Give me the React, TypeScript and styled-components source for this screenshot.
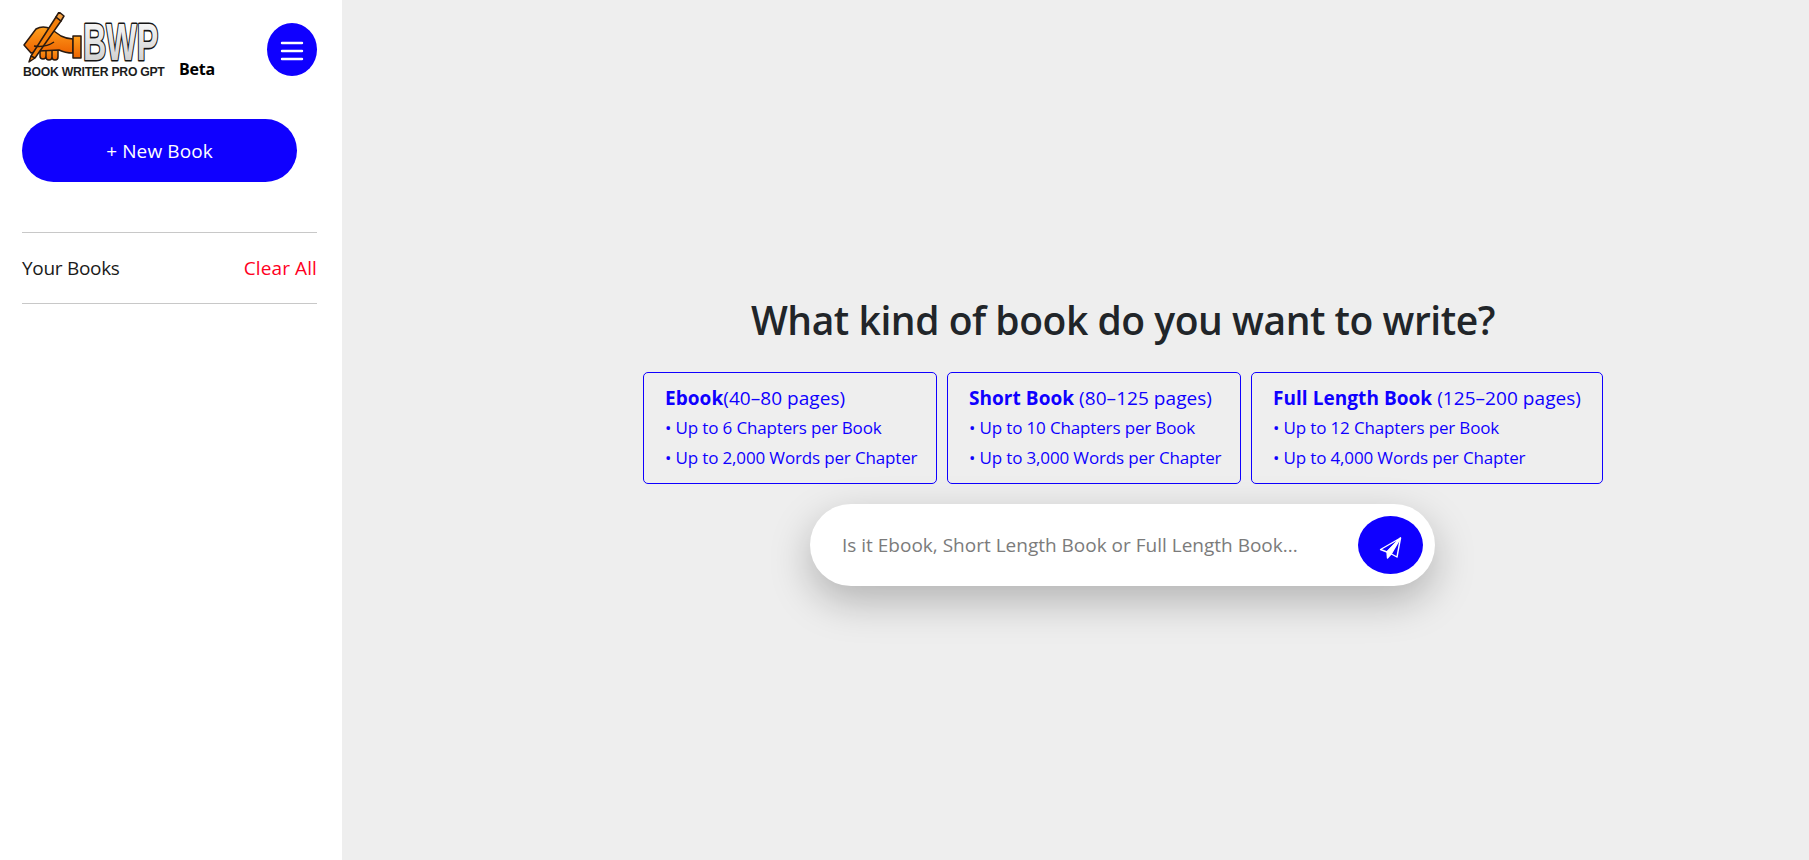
import React from "react";
import styled, { createGlobalStyle } from "styled-components";

const Global = createGlobalStyle`
  html, body { margin: 0; padding: 0; height: 100%; background: #eee; }
  body { font-family: "Open Sans", "Noto Sans", sans-serif; overflow: hidden; }
  * { box-sizing: border-box; }
`;

const Page = styled.div`
  display: flex;
  width: 1809px;
  height: 860px;
  background: #eeeeee;
`;

const Sidebar = styled.aside`
  width: 342px;
  flex: none;
  background: #fff;
  padding: 12px 25px 0 22px;
`;

const Brand = styled.div`
  display: flex;
  align-items: flex-start;
  justify-content: space-between;
  height: 107px;
`;

const LogoWrap = styled.div`
  display: flex;
  align-items: flex-end;
  margin-left: 1px;
  height: 66px;
`;

const Beta = styled.span`
  font-size: 16px;
  font-weight: 700;
  color: #000;
  margin-left: 6px;
  letter-spacing: -0.2px;
  line-height: 18px;
`;

const MenuButton = styled.button`
  width: 50px;
  height: 53px;
  margin-top: 11px;
  border: 0;
  border-radius: 50%;
  background: #0f00ff;
  display: flex;
  align-items: center;
  justify-content: center;
  padding: 2px 0 0;
`;

const NewBook = styled.button`
  display: block;
  width: 275px;
  height: 63px;
  border: 0;
  border-radius: 32px;
  background: #0f00ff;
  color: #fff;
  font: 400 19px "Open Sans", sans-serif;
  letter-spacing: 0.1px;
`;

const ListHead = styled.div`
  display: flex;
  align-items: center;
  justify-content: space-between;
  height: 72px;
  margin-top: 50px;
  border-top: 1px solid #c8c8c8;
  border-bottom: 1px solid #c8c8c8;
  font-size: 19px;
  letter-spacing: -0.1px;
`;

const ListTitle = styled.span`
  color: #1a1a1a;
  letter-spacing: -0.3px;
`;

const ClearAll = styled.span`
  color: #ff0022;
  letter-spacing: 0.1px;
`;

const Main = styled.main`
  flex: 1;
  display: flex;
  flex-direction: column;
  align-items: center;
  padding: 294px 0 0 95px;
`;

const Title = styled.h1`
  margin: 0;
  font-size: 39px;
  line-height: 52px;
  font-weight: 600;
  color: #212529;
  letter-spacing: -0.45px;
`;

const Cards = styled.div`
  display: flex;
  gap: 10px;
  margin-top: 26px;
`;

const Card = styled.div<{ $w: number }>`
  width: ${(p) => p.$w}px;
  height: 112px;
  border: 1px solid #0f00ff;
  border-radius: 5px;
  padding: 10px 0 0 21px;
  color: #0f00ff;
  font-size: 17px;
  letter-spacing: -0.15px;
`;

const CardHead = styled.div`
  font-size: 19px;
  line-height: 30px;
  letter-spacing: 0.05px;
  strong { font-weight: 700; }
`;

const CardLine = styled.div`
  line-height: 30px;
`;

const InputBar = styled.div`
  width: 625px;
  height: 82px;
  margin: 20px 1px 0 0;
  border-radius: 41px;
  background: #fff;
  display: flex;
  align-items: center;
  justify-content: space-between;
  padding: 0 12px 0 32px;
  box-shadow: 0 15px 40px rgba(0, 0, 0, 0.25);
`;

const Placeholder = styled.span`
  font-size: 19px;
  color: #7b7b7b;
`;

const SendButton = styled.button`
  width: 65px;
  height: 58px;
  border: 0;
  border-radius: 50%;
  background: #0f00ff;
  display: flex;
  align-items: center;
  justify-content: center;
  padding: 5px 0 0;
`;

const Logo = () => (
  <svg width="150" height="66" viewBox="0 0 150 66">
    <defs>
      <linearGradient id="o" x1="0" y1="0" x2="0" y2="1">
        <stop offset="0" stopColor="#ffa01e" />
        <stop offset="1" stopColor="#ee6400" />
      </linearGradient>
      <linearGradient id="g" x1="0" y1="0" x2="0" y2="1">
        <stop offset="0" stopColor="#ffffff" />
        <stop offset="1" stopColor="#c8c8c8" />
      </linearGradient>
    </defs>
    <g stroke="#2a1a10" strokeWidth="1.5" strokeLinejoin="round" fill="url(#o)">
      <path d="M17 36h6v8a3 3 0 0 1-6 0zM23 36h6v9a3 3 0 0 1-6 0zM29 36h6v9a3 3 0 0 1-6 0z" />
      <path d="M1 33 L13 17 Q20 13 28 17 L38 24 Q44 27 50 27 L50 41 Q42 41 36 38 L16 39 L8 41Z" />
      <path d="M50 24 H58 V46 H50Z" />
      <path d="M8 44 L6 50 L12 46 L38 9 L33 5Z" fill="#f57f0a" />
      <path d="M33 5 L36 0 L41 4 L38 9Z" fill="#f5a040" />
      <path d="M8 44 L12 46" />
      <path d="M11 34 Q22 36 31 30" fill="none" />
    </g>
    <text
      transform="translate(60 48) scale(0.62 1)"
      fontFamily="'Liberation Sans', sans-serif"
      fontWeight="700"
      fontSize="52"
      fill="url(#g)"
      stroke="#151515"
      strokeWidth="3.2"
      strokeLinejoin="round"
      style={{ paintOrder: "stroke" }}
    >
      BWP
    </text>
    <text
      transform="translate(0 64) scale(0.9 1)"
      fontFamily="'Liberation Sans', sans-serif"
      fontWeight="700"
      fontSize="13.6"
      fill="#1c1c1c"
      letterSpacing="-0.3"
    >
      BOOK WRITER PRO GPT
    </text>
  </svg>
);

const Burger = () => (
  <svg width="24" height="24" viewBox="0 0 24 24" fill="none" stroke="#fff" strokeWidth="2.4" strokeLinecap="round">
    <path d="M2 4h20M2 12h20M2 20h20" />
  </svg>
);

const SendIcon = () => (
  <svg width="24" height="24" viewBox="0 0 24 24" fill="none" stroke="#fff" strokeWidth="1.4" strokeLinejoin="round">
    <path d="M21.5 2 L1.5 13.5 L8 16 Z" />
    <path d="M21.5 2 L18 21 L11.5 17.5" />
    <path d="M21.5 2 L8 16 L8.5 22 L12.5 17.5 Z" fill="#fff" />
  </svg>
);

const data = [
  { w: 294, b: "Ebook", r: "(40–80 pages)", c: "6", m: "2,000" },
  { w: 294, b: "Short Book", r: " (80–125 pages)", c: "10", m: "3,000" },
  { w: 352, b: "Full Length Book", r: " (125–200 pages)", c: "12", m: "4,000" },
];

export default function App() {
  return (
    <Page>
      <Global />
      <Sidebar>
        <Brand>
          <LogoWrap>
            <Logo />
            <Beta>Beta</Beta>
          </LogoWrap>
          <MenuButton aria-label="Menu"><Burger /></MenuButton>
        </Brand>
        <NewBook>+ New Book</NewBook>
        <ListHead>
          <ListTitle>Your Books</ListTitle>
          <ClearAll>Clear All</ClearAll>
        </ListHead>
      </Sidebar>
      <Main>
        <Title>What kind of book do you want to write?</Title>
        <Cards>
          {data.map((d) => (
            <Card key={d.b} $w={d.w}>
              <CardHead><strong>{d.b}</strong>{d.r}</CardHead>
              <CardLine>• Up to {d.c} Chapters per Book</CardLine>
              <CardLine>• Up to {d.m} Words per Chapter</CardLine>
            </Card>
          ))}
        </Cards>
        <InputBar>
          <Placeholder>Is it Ebook, Short Length Book or Full Length Book...</Placeholder>
          <SendButton aria-label="Send"><SendIcon /></SendButton>
        </InputBar>
      </Main>
    </Page>
  );
}
